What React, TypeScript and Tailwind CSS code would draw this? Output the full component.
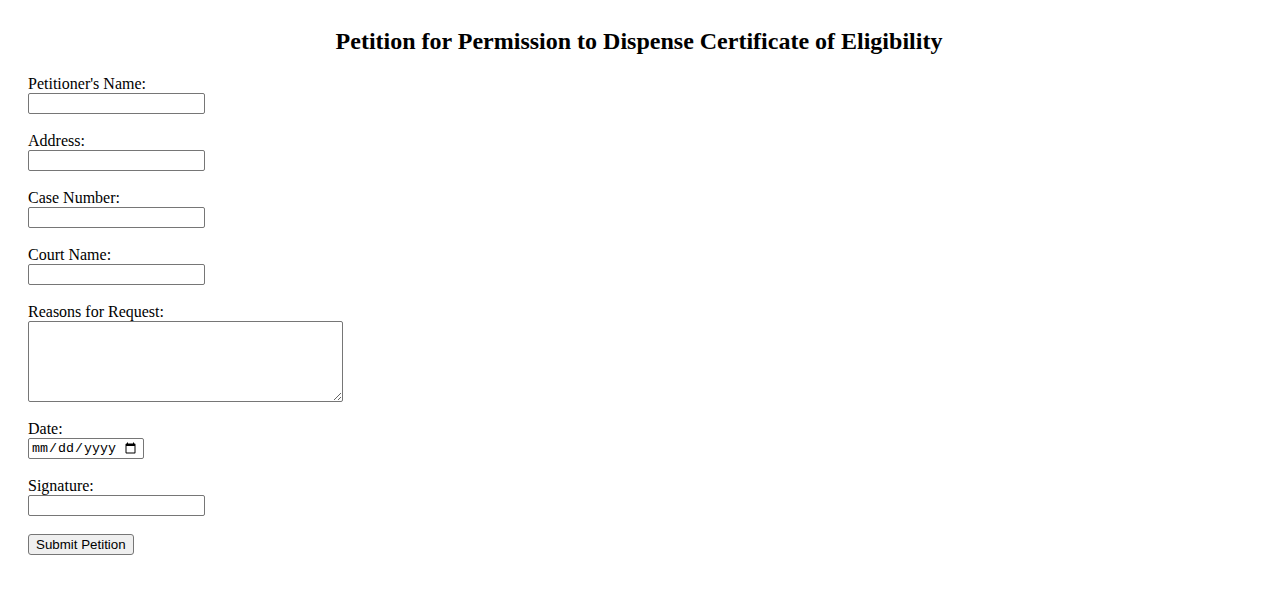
import React from "react";

const fields = [
  { id: "name", label: "Petitioner's Name:" },
  { id: "address", label: "Address:" },
  { id: "case", label: "Case Number:" },
  { id: "court", label: "Court Name:" },
];

const labelCls = "block pt-px leading-[18px]";

const inputCls =
  "block h-[21px] w-[177px] rounded-[2px] border border-[#767676] bg-white px-[2px] text-[13.33px] font-['Liberation_Sans',sans-serif]";

export default function App() {
  return (
    <div className="min-h-screen bg-white text-black font-['Liberation_Serif',serif] text-[16px]">
      <div className="px-[28px] pt-[27px]">
        <h2 className="text-center text-[24px] font-bold leading-[28px]">
          Petition for Permission to Dispense Certificate of Eligibility
        </h2>
        <form className="mt-[19px]" onSubmit={(e) => e.preventDefault()}>
          {fields.map((f) => (
            <div key={f.id} className="mb-[17px]">
              <label htmlFor={f.id} className={labelCls}>
                {f.label}
              </label>
              <input id={f.id} type="text" className={inputCls} />
            </div>
          ))}
          <div className="mb-[17px]">
            <label htmlFor="reasons" className={labelCls}>
              Reasons for Request:
            </label>
            <textarea
              id="reasons"
              className="block h-[81px] w-[315px] rounded-[2px] border border-[#767676] bg-white px-[2px] text-[13.33px] font-['Liberation_Mono',monospace]"
            />
          </div>
          <div className="mb-[17px]">
            <label htmlFor="date" className={labelCls}>
              Date:
            </label>
            <input
              id="date"
              type="date"
              className="block h-[21px] w-[116px] rounded-[2px] border border-[#767676] bg-white pl-[2px] pr-[4px] text-[13.33px] font-['Liberation_Mono',monospace]"
            />
          </div>
          <div className="mb-[18px]">
            <label htmlFor="sig" className={labelCls}>
              Signature:
            </label>
            <input id="sig" type="text" className={inputCls} />
          </div>
          <button
            type="submit"
            className="block h-[21px] rounded-[3px] border border-[#767676] bg-[#efefef] px-[7px] text-[13.33px] leading-[17px] font-['Liberation_Sans',sans-serif]"
          >
            Submit Petition
          </button>
        </form>
      </div>
    </div>
  );
}
